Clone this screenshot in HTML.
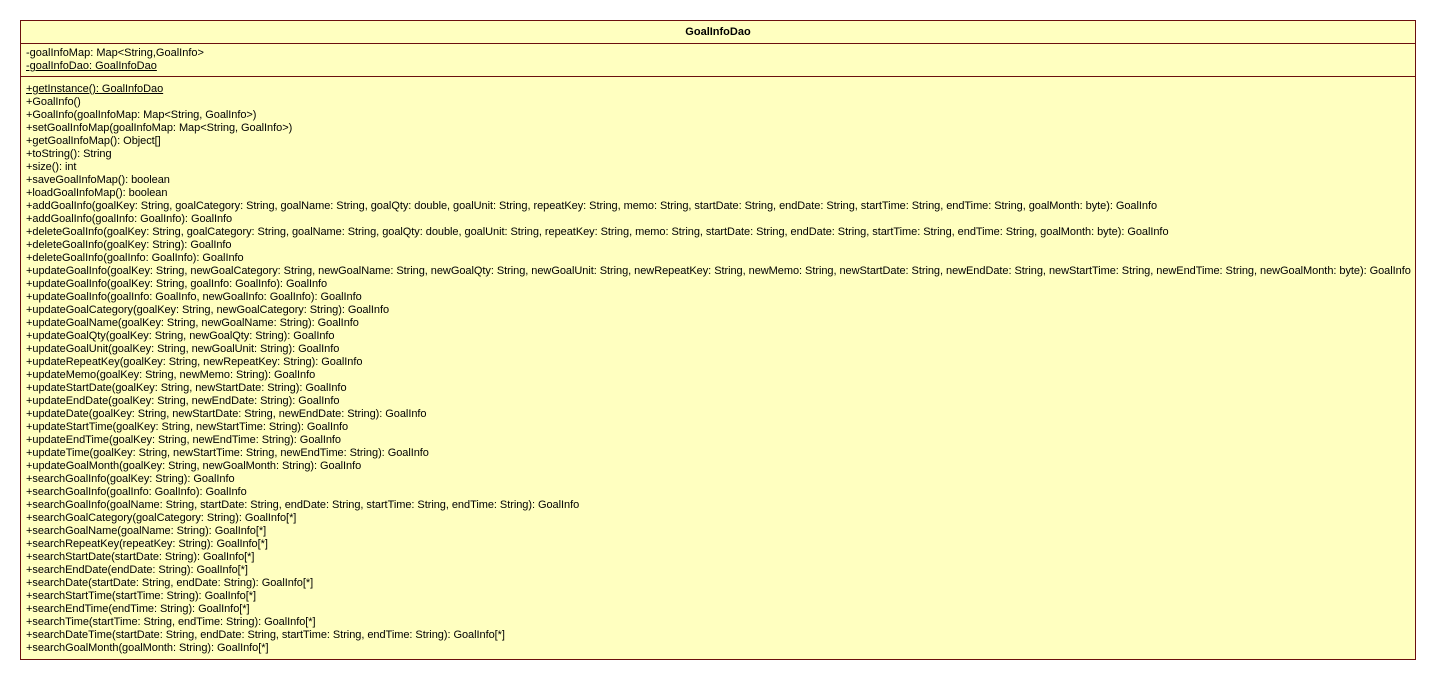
<!DOCTYPE html>
<html><head><meta charset="utf-8"><style>
body{margin:0;background:#fff;width:1436px;height:680px;overflow:hidden;font-family:"Liberation Sans","DejaVu Sans",sans-serif;font-size:11px;color:#000}
.box{position:absolute;left:20px;top:20px;width:1394px;height:638px;border:1px solid #6b0f0f;background:#ffffc0}
.title{height:22px;line-height:22px;text-align:center;font-weight:bold;border-bottom:1px solid #6b0f0f}
.attr{padding:3px 0 3px 5px;border-bottom:1px solid #6b0f0f;height:26px}
.meth{padding:6px 0 0 5px;letter-spacing:-0.05px}
.l{height:13px;line-height:13px;white-space:nowrap}
u{text-decoration:underline}
</style></head><body><div class="box">
<div class="title">GoalInfoDao</div>
<div class="attr"><div class="l">-goalInfoMap: Map&lt;String,GoalInfo&gt;</div><div class="l"><u>-goalInfoDao: GoalInfoDao</u></div></div>
<div class="meth">
<div class="l"><u>+getInstance(): GoalInfoDao</u></div>
<div class="l">+GoalInfo()</div>
<div class="l">+GoalInfo(goalInfoMap: Map&lt;String, GoalInfo&gt;)</div>
<div class="l">+setGoalInfoMap(goalInfoMap: Map&lt;String, GoalInfo&gt;)</div>
<div class="l">+getGoalInfoMap(): Object[]</div>
<div class="l">+toString(): String</div>
<div class="l">+size(): int</div>
<div class="l">+saveGoalInfoMap(): boolean</div>
<div class="l">+loadGoalInfoMap(): boolean</div>
<div class="l">+addGoalInfo(goalKey: String, goalCategory: String, goalName: String, goalQty: double, goalUnit: String, repeatKey: String, memo: String, startDate: String, endDate: String, startTime: String, endTime: String, goalMonth: byte): GoalInfo</div>
<div class="l">+addGoalInfo(goalInfo: GoalInfo): GoalInfo</div>
<div class="l">+deleteGoalInfo(goalKey: String, goalCategory: String, goalName: String, goalQty: double, goalUnit: String, repeatKey: String, memo: String, startDate: String, endDate: String, startTime: String, endTime: String, goalMonth: byte): GoalInfo</div>
<div class="l">+deleteGoalInfo(goalKey: String): GoalInfo</div>
<div class="l">+deleteGoalInfo(goalInfo: GoalInfo): GoalInfo</div>
<div class="l">+updateGoalInfo(goalKey: String, newGoalCategory: String, newGoalName: String, newGoalQty: String, newGoalUnit: String, newRepeatKey: String, newMemo: String, newStartDate: String, newEndDate: String, newStartTime: String, newEndTime: String, newGoalMonth: byte): GoalInfo</div>
<div class="l">+updateGoalInfo(goalKey: String, goalInfo: GoalInfo): GoalInfo</div>
<div class="l">+updateGoalInfo(goalInfo: GoalInfo, newGoalInfo: GoalInfo): GoalInfo</div>
<div class="l">+updateGoalCategory(goalKey: String, newGoalCategory: String): GoalInfo</div>
<div class="l">+updateGoalName(goalKey: String, newGoalName: String): GoalInfo</div>
<div class="l">+updateGoalQty(goalKey: String, newGoalQty: String): GoalInfo</div>
<div class="l">+updateGoalUnit(goalKey: String, newGoalUnit: String): GoalInfo</div>
<div class="l">+updateRepeatKey(goalKey: String, newRepeatKey: String): GoalInfo</div>
<div class="l">+updateMemo(goalKey: String, newMemo: String): GoalInfo</div>
<div class="l">+updateStartDate(goalKey: String, newStartDate: String): GoalInfo</div>
<div class="l">+updateEndDate(goalKey: String, newEndDate: String): GoalInfo</div>
<div class="l">+updateDate(goalKey: String, newStartDate: String, newEndDate: String): GoalInfo</div>
<div class="l">+updateStartTime(goalKey: String, newStartTime: String): GoalInfo</div>
<div class="l">+updateEndTime(goalKey: String, newEndTime: String): GoalInfo</div>
<div class="l">+updateTime(goalKey: String, newStartTime: String, newEndTime: String): GoalInfo</div>
<div class="l">+updateGoalMonth(goalKey: String, newGoalMonth: String): GoalInfo</div>
<div class="l">+searchGoalInfo(goalKey: String): GoalInfo</div>
<div class="l">+searchGoalInfo(goalInfo: GoalInfo): GoalInfo</div>
<div class="l">+searchGoalInfo(goalName: String, startDate: String, endDate: String, startTime: String, endTime: String): GoalInfo</div>
<div class="l">+searchGoalCategory(goalCategory: String): GoalInfo[*]</div>
<div class="l">+searchGoalName(goalName: String): GoalInfo[*]</div>
<div class="l">+searchRepeatKey(repeatKey: String): GoalInfo[*]</div>
<div class="l">+searchStartDate(startDate: String): GoalInfo[*]</div>
<div class="l">+searchEndDate(endDate: String): GoalInfo[*]</div>
<div class="l">+searchDate(startDate: String, endDate: String): GoalInfo[*]</div>
<div class="l">+searchStartTime(startTime: String): GoalInfo[*]</div>
<div class="l">+searchEndTime(endTime: String): GoalInfo[*]</div>
<div class="l">+searchTime(startTime: String, endTime: String): GoalInfo[*]</div>
<div class="l">+searchDateTime(startDate: String, endDate: String, startTime: String, endTime: String): GoalInfo[*]</div>
<div class="l">+searchGoalMonth(goalMonth: String): GoalInfo[*]</div>
</div></div></body></html>
